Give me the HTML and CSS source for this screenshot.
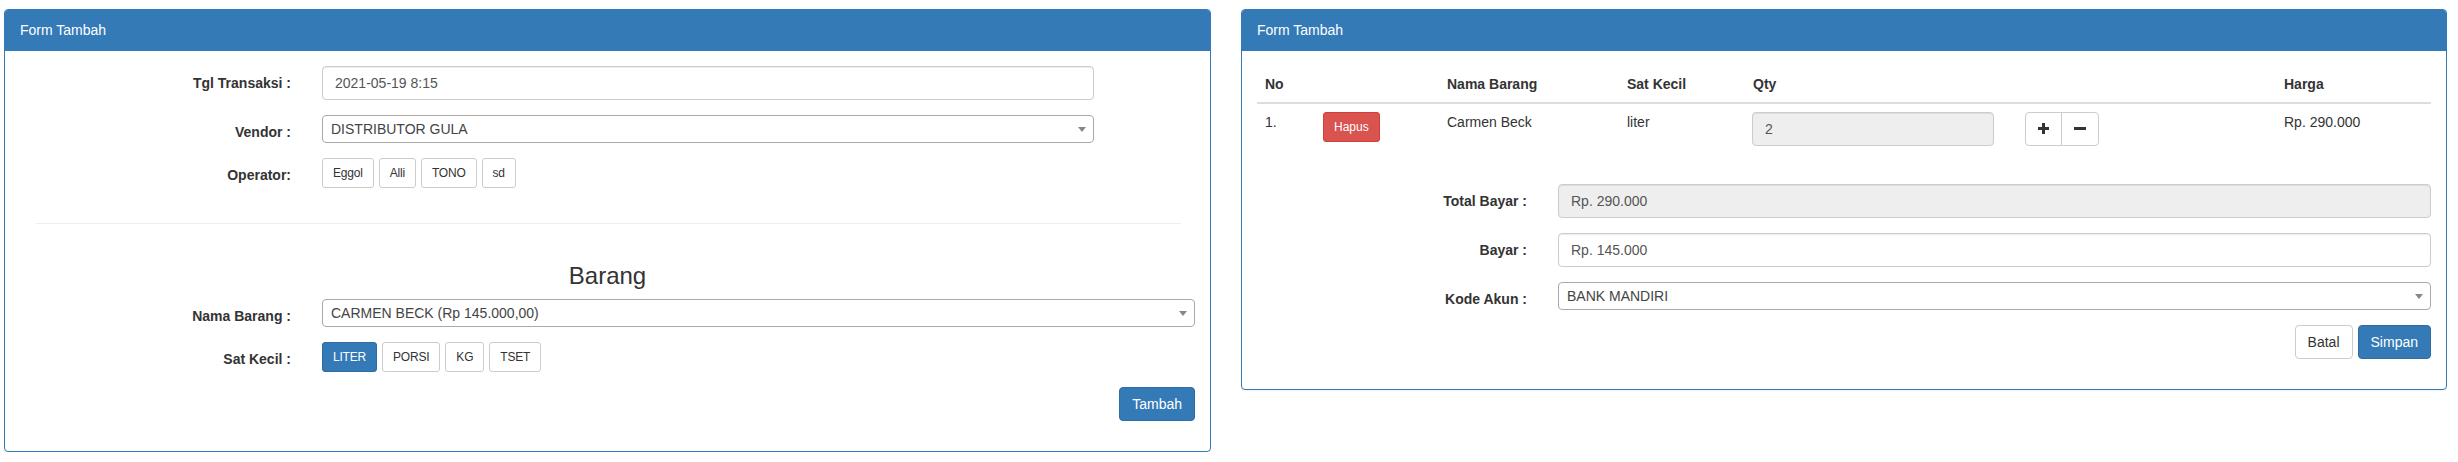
FILE: index.html
```html
<!DOCTYPE html>
<html lang="id">
<head>
<meta charset="utf-8">
<title>Form Tambah</title>
<link rel="stylesheet" href="styles.css">
</head>
<body>
<div class="page">
  <section class="panel panel-left">
    <div class="panel-heading">Form Tambah</div>
    <div class="panel-body">
      <div class="form-group cols-left">
        <label class="control-label">Tgl Transaksi :</label>
        <div class="field-md"><input class="form-control" type="text" value="2021-05-19 8:15"></div>
      </div>
      <div class="form-group cols-left">
        <label class="control-label">Vendor :</label>
        <div class="field-md">
          <div class="select2"><span class="select2-text">DISTRIBUTOR GULA</span><span class="select2-arrow"><b></b></span></div>
        </div>
      </div>
      <div class="form-group cols-left">
        <label class="control-label">Operator:</label>
        <div class="btn-row">
          <button class="btn btn-sm btn-default">Eggol</button>
          <button class="btn btn-sm btn-default">Alli</button>
          <button class="btn btn-sm btn-default">TONO</button>
          <button class="btn btn-sm btn-default">sd</button>
        </div>
      </div>
      <hr class="divider">
      <h3 class="section-title">Barang</h3>
      <div class="form-group cols-left">
        <label class="control-label">Nama Barang :</label>
        <div class="select2"><span class="select2-text">CARMEN BECK (Rp 145.000,00)</span><span class="select2-arrow"><b></b></span></div>
      </div>
      <div class="form-group cols-left">
        <label class="control-label">Sat Kecil :</label>
        <div class="btn-row">
          <button class="btn btn-sm btn-primary">LITER</button>
          <button class="btn btn-sm btn-default">PORSI</button>
          <button class="btn btn-sm btn-default">KG</button>
          <button class="btn btn-sm btn-default">TSET</button>
        </div>
      </div>
      <div class="form-group actions">
        <button class="btn btn-primary">Tambah</button>
      </div>
    </div>
  </section>

  <section class="panel panel-right">
    <div class="panel-heading">Form Tambah</div>
    <div class="panel-body">
      <table class="table">
        <colgroup>
          <col class="c-no"><col class="c-act"><col class="c-name"><col class="c-sat"><col class="c-qty"><col class="c-harga">
        </colgroup>
        <thead>
          <tr><th>No</th><th></th><th>Nama Barang</th><th>Sat Kecil</th><th>Qty</th><th>Harga</th></tr>
        </thead>
        <tbody>
          <tr>
            <td>1.</td>
            <td><button class="btn btn-sm btn-danger">Hapus</button></td>
            <td>Carmen Beck</td>
            <td>liter</td>
            <td>
              <div class="qty-row">
                <input class="form-control qty-input" type="text" value="2" readonly>
                <div class="btn-group">
                  <button class="btn btn-default btn-icon" aria-label="tambah"><svg width="11" height="11" viewBox="0 0 11 11"><rect x="0" y="4" width="11" height="3"/><rect x="4" y="0" width="3" height="11"/></svg></button>
                  <button class="btn btn-default btn-icon" aria-label="kurang"><svg width="12" height="11" viewBox="0 0 12 11"><rect x="0" y="4" width="12" height="3"/></svg></button>
                </div>
              </div>
            </td>
            <td>Rp. 290.000</td>
          </tr>
        </tbody>
      </table>
      <div class="form-group cols-right">
        <label class="control-label">Total Bayar :</label>
        <input class="form-control" type="text" value="Rp. 290.000" readonly>
      </div>
      <div class="form-group cols-right">
        <label class="control-label">Bayar :</label>
        <input class="form-control" type="text" value="Rp. 145.000">
      </div>
      <div class="form-group cols-right">
        <label class="control-label">Kode Akun :</label>
        <div class="select2"><span class="select2-text">BANK MANDIRI</span><span class="select2-arrow"><b></b></span></div>
      </div>
      <div class="form-group actions">
        <button class="btn btn-default">Batal</button>
        <button class="btn btn-primary">Simpan</button>
      </div>
    </div>
  </section>
</div>
</body>
</html>
```

FILE: styles.css
```css
* { box-sizing: border-box; }

html, body {
  margin: 0;
  padding: 0;
  background: #fff;
}

body {
  font-family: "Liberation Sans", Arial, Helvetica, sans-serif;
  font-size: 14px;
  line-height: 20px;
  color: #333;
}

.page {
  display: grid;
  grid-template-columns: 1207px 1206px;
  column-gap: 30px;
  align-items: start;
  padding: 9px 0 0 4px;
}

.panel {
  border: 1px solid #337ab7;
  border-radius: 4px;
  background: #fff;
  box-shadow: 0 1px 1px rgba(0, 0, 0, .05);
}

.panel-heading {
  background: #337ab7;
  color: #fff;
  padding: 10px 15px;
  line-height: 20px;
  font-size: 14px;
  border-bottom: 1px solid #337ab7;
  border-radius: 3px 3px 0 0;
}

.panel-body {
  padding: 15px;
}

.form-group {
  margin-bottom: 15px;
}

.cols-left {
  display: grid;
  grid-template-columns: 271px 1fr;
  column-gap: 31px;
  align-items: start;
}

.cols-right {
  display: grid;
  grid-template-columns: 270px 1fr;
  column-gap: 31px;
  align-items: start;
}

.control-label {
  text-align: right;
  font-weight: bold;
  padding-top: 7px;
  line-height: 20px;
}

.field-md {
  width: 772px;
}

.form-control {
  display: block;
  width: 100%;
  height: 34px;
  padding: 6px 12px;
  font-family: inherit;
  font-size: 14px;
  line-height: 20px;
  color: #555;
  background: #fff;
  border: 1px solid #ccc;
  border-radius: 4px;
  box-shadow: inset 0 1px 1px rgba(0, 0, 0, .075);
  margin: 0;
}

.form-control[readonly] {
  background: #eee;
}

.select2 {
  display: flex;
  align-items: center;
  height: 28px;
  background: #fff;
  border: 1px solid #aaa;
  border-radius: 4px;
}

.select2-text {
  flex: 1;
  padding-left: 8px;
  color: #444;
  line-height: 26px;
  white-space: nowrap;
}

.select2-arrow {
  width: 20px;
  height: 26px;
  margin-right: 1px;
  display: flex;
  align-items: center;
  justify-content: center;
}

.select2-arrow b {
  width: 0;
  height: 0;
  border-style: solid;
  border-width: 5px 4px 0 4px;
  border-color: #888 transparent transparent transparent;
}

.btn-row {
  display: flex;
  gap: 5px;
}

.btn {
  display: inline-block;
  margin: 0;
  font-family: inherit;
  font-size: 14px;
  line-height: 20px;
  padding: 6px 12px;
  border: 1px solid transparent;
  border-radius: 4px;
  text-align: center;
  white-space: nowrap;
  cursor: pointer;
}

.btn-sm {
  font-size: 12px;
  line-height: 18px;
  padding: 5px 10px;
  border-radius: 3px;
}

.btn-row .btn-sm {
  letter-spacing: -0.2px;
}

.btn-default {
  color: #333;
  background: #fff;
  border-color: #ccc;
}

.btn-primary {
  color: #fff;
  background: #337ab7;
  border-color: #2e6da4;
}

.btn-danger {
  color: #fff;
  background: #d9534f;
  border-color: #d43f3a;
}

.divider {
  border: 0;
  border-top: 1px solid #eee;
  margin: 35px 14px 0 16px;
}

.section-title {
  margin: 39px 0 10px;
  font-size: 24px;
  font-weight: normal;
  line-height: 26.4px;
  text-align: center;
  color: #333;
}

.actions {
  display: flex;
  justify-content: flex-end;
  gap: 5px;
}

.table {
  width: 100%;
  table-layout: fixed;
  border-collapse: collapse;
  border-spacing: 0;
  margin-bottom: 30px;
}

.c-no { width: 58px; }
.c-act { width: 124px; }
.c-name { width: 180px; }
.c-sat { width: 126px; }
.c-qty { width: 531px; }
.c-harga { width: 155px; }

.table th {
  text-align: left;
  font-weight: bold;
  padding: 8px;
  line-height: 20px;
  vertical-align: bottom;
  border-bottom: 2px solid #ddd;
}

.table td {
  padding: 8px;
  line-height: 20px;
  vertical-align: top;
}

.qty-row {
  display: flex;
  align-items: flex-start;
  gap: 31px;
  margin-left: -1px;
}

.qty-input {
  width: 242px;
}

.btn-group {
  display: flex;
}

.btn-icon {
  height: 34px;
  display: flex;
  align-items: center;
  justify-content: center;
  padding: 6px 12px;
}

.btn-icon svg {
  fill: #333;
  display: block;
  margin-top: -1px;
}

.btn-group .btn-icon:first-child {
  border-radius: 4px 0 0 4px;
}

.btn-group .btn-icon:last-child {
  border-radius: 0 4px 4px 0;
  margin-left: -1px;
}
```
